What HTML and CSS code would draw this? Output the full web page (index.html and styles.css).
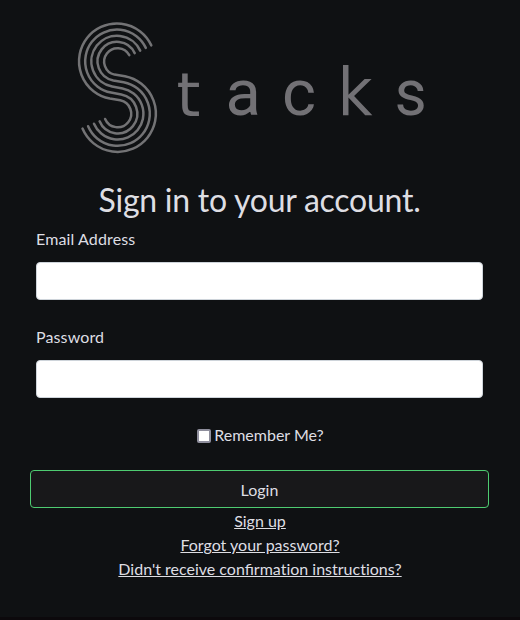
FILE: index.html
```html
<!DOCTYPE html>
<html lang="en">
<head>
<meta charset="utf-8">
<title>Stacks</title>
<link rel="stylesheet" href="styles.css">
</head>
<body>
<main class="panel">
  <svg class="logo" viewBox="70 15 364 145" role="img" aria-label="Stacks">
    <g class="mark">
      <path d="M151.3 45.4A37.9 37.9 0 1 0 109.8 98.6L120.2 100.3A13.6 13.6 0 1 1 105.1 119"/>
      <path d="M145.8 47.9A31.8 31.8 0 1 0 111 92.6L121.3 94.5A19.6 19.6 0 1 1 99.6 121.3"/>
      <path d="M140.2 50.6A25.6 25.6 0 1 0 112.1 86.5L122.5 88.5A25.7 25.7 0 1 1 94 123.7"/>
      <path d="M134.7 53.1A19.5 19.5 0 1 0 113.3 80.5L123.7 82.2A32.1 32.1 0 1 1 88.1 126.2"/>
      <path d="M129.3 55.1A13.4 13.4 0 1 0 114.5 74.6L124.9 76.2A38.2 38.2 0 1 1 82.5 128.6"/>
    </g>
    <g class="word">
      <text class="wide-t" x="176.5" y="115.5">t</text>
      <text y="115.3" x="225.5 282">ac</text>
      <text class="wide-k" x="337.5" y="115.3" textLength="35" lengthAdjust="spacingAndGlyphs">k</text>
      <text x="394.5" y="115.3" textLength="32.3" lengthAdjust="spacingAndGlyphs">s</text>
    </g>
  </svg>
  <h1 class="title">Sign in to your account.</h1>
  <form class="form">
    <div class="field">
      <label class="caption" for="email">Email Address</label>
      <input class="control" id="email" type="email">
    </div>
    <div class="field">
      <label class="caption" for="password">Password</label>
      <input class="control" id="password" type="password">
    </div>
    <label class="remember"><input class="check" type="checkbox">Remember Me?</label>
    <button class="login" type="button">Login</button>
  </form>
  <nav class="links">
    <a href="#">Sign up</a>
    <a href="#">Forgot your password?</a>
    <a href="#">Didn't receive confirmat&zwnj;ion instruct&zwnj;ions?</a>
  </nav>
</main>
</body>
</html>
```
FILE: styles.css
```css
* { box-sizing: border-box; }
body {
  margin: 0;
  height: 620px;
  overflow: hidden;
  background: #0c090c;
  color: #dedee3;
  font: 16px/24px Lato, sans-serif;
}
.panel {
  height: 617px;
  padding: 15px 31px 0 30px;
  background: #0f1113;
}
.logo {
  display: block;
  width: 364px;
  height: 145px;
  margin-left: 40px;
}
.mark {
  fill: none;
  stroke: #737375;
  stroke-width: 2.5;
  stroke-linecap: round;
}
.word {
  fill: #727175;
  font: 65px Roboto, sans-serif;
}
.wide-t { font: 61px "DejaVu Sans", sans-serif; }
.wide-k { font: 65px "DejaVu Sans", sans-serif; }
.title {
  margin: 20px 0 7px;
  text-align: center;
  font-size: 32px;
  font-weight: 400;
  line-height: 40px;
  letter-spacing: -0.25px;
}
.field {
  display: flex;
  flex-direction: column;
  gap: 11px;
  padding: 0 6px;
  margin-bottom: 25px;
}
.caption { letter-spacing: 0.13px; }
.control {
  width: 100%;
  height: 38px;
  border: 1px solid #ced4da;
  border-radius: 4px;
  background: #fff;
}
.remember {
  display: flex;
  justify-content: center;
  align-items: center;
  gap: 3px;
  padding-left: 2px;
  margin-bottom: 23px;
}
.check {
  appearance: none;
  width: 14px;
  height: 14px;
  margin: 2px 0 0;
  border: 2px solid #8f8f9d;
  border-radius: 2px;
  background: #fff;
}
.login {
  display: block;
  width: 100%;
  height: 38px;
  padding: 2px 0 0;
  border: 1px solid #4ecb71;
  border-radius: 4px;
  background: #18181a;
  color: inherit;
  font: inherit;
}
.links {
  display: flex;
  flex-direction: column;
  align-items: center;
  padding: 1px 0 0 1px;
}
.links a { color: inherit; }
```
